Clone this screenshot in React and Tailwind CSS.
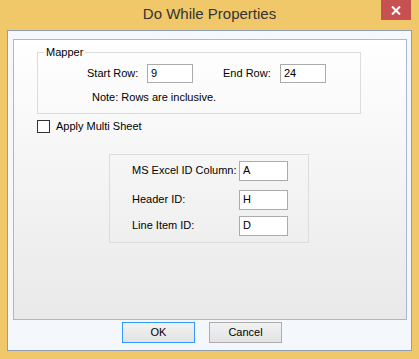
import React from "react"

const font = { fontFamily: '"Liberation Sans", Arial, sans-serif' }

function Field({ value, className }) {
  return (
    <div className={`flex items-center border border-[#ababab] bg-white pl-[3px] text-[11px] text-black ${className}`}>
      {value}
    </div>
  )
}

function Button({ label, focused }) {
  return (
    <button
      className={`flex h-[21px] w-[73px] items-center justify-center border bg-gradient-to-b from-[#f2f2f2] to-[#e3e3e3] text-[11px] text-black ${
        focused ? "border-[#3399ff]" : "border-[#adadad]"
      }`}
    >
      {label}
    </button>
  )
}

export default function App() {
  return (
    <div className="relative flex h-[359px] w-[419px] flex-col bg-[#f0c86a]" style={font}>
      {/* title bar */}
      <div className="flex h-[30px] items-center justify-center pb-[1px] text-[15px] text-[#333]">
        Do While Properties
      </div>
      <div className="absolute right-[8px] top-0 flex h-[20px] w-[30px] items-center justify-center bg-[#c75050]">
        <svg width="10" height="9" viewBox="0 0 10 9">
          <path d="M1 0.5 L9 8.5 M9 0.5 L1 8.5" stroke="#fff" strokeWidth="2" />
        </svg>
      </div>

      {/* client area */}
      <div className="mx-[7px] mb-[8px] flex flex-1 flex-col border border-[#8f9db5] bg-[#f4f7fc] pl-[5px] pr-[4px] pt-[8px]">
        <div className="relative h-[281px] border border-[#a6b9d3] bg-gradient-to-b from-white to-[#e9e9e9] text-[11px] text-black">
          <fieldset className="ml-[23px] mt-[6px] h-[68px] w-[324px] border border-[#dcdcdc]">
            <legend className="ml-[6px] px-[2px] leading-[13px]">Mapper</legend>
            <div className="mt-[5px] flex items-center">
              <span className="ml-[49px] w-[60px]">Start Row:</span>
              <Field value="9" className="h-[19px] w-[46px]" />
              <span className="ml-[30px] w-[57px]">End Row:</span>
              <Field value="24" className="h-[19px] w-[46px]" />
            </div>
            <div className="ml-[54px] mt-[6px]">Note: Rows are inclusive.</div>
          </fieldset>

          <div className="ml-[23px] mt-[4px] flex items-center">
            <div className="h-[13px] w-[13px] border border-[#333] bg-white" />
            <span className="ml-[6px]">Apply Multi Sheet</span>
          </div>

          <div className="ml-[95px] mt-[19px] flex h-[89px] w-[200px] flex-col border border-[#dcdcdc] pl-[22px] pt-[6px]">
            <div className="flex items-center">
              <span className="w-[107px]">MS Excel ID Column:</span>
              <Field value="A" className="h-[20px] w-[49px]" />
            </div>
            <div className="mt-[9px] flex items-center">
              <span className="w-[107px]">Header ID:</span>
              <Field value="H" className="h-[20px] w-[49px]" />
            </div>
            <div className="mt-[6px] flex items-center">
              <span className="w-[107px]">Line Item ID:</span>
              <Field value="D" className="h-[20px] w-[49px]" />
            </div>
          </div>
        </div>

        <div className="mt-[2px] flex gap-[14px] pl-[109px]">
          <Button label="OK" focused />
          <Button label="Cancel" />
        </div>
      </div>
    </div>
  )
}
